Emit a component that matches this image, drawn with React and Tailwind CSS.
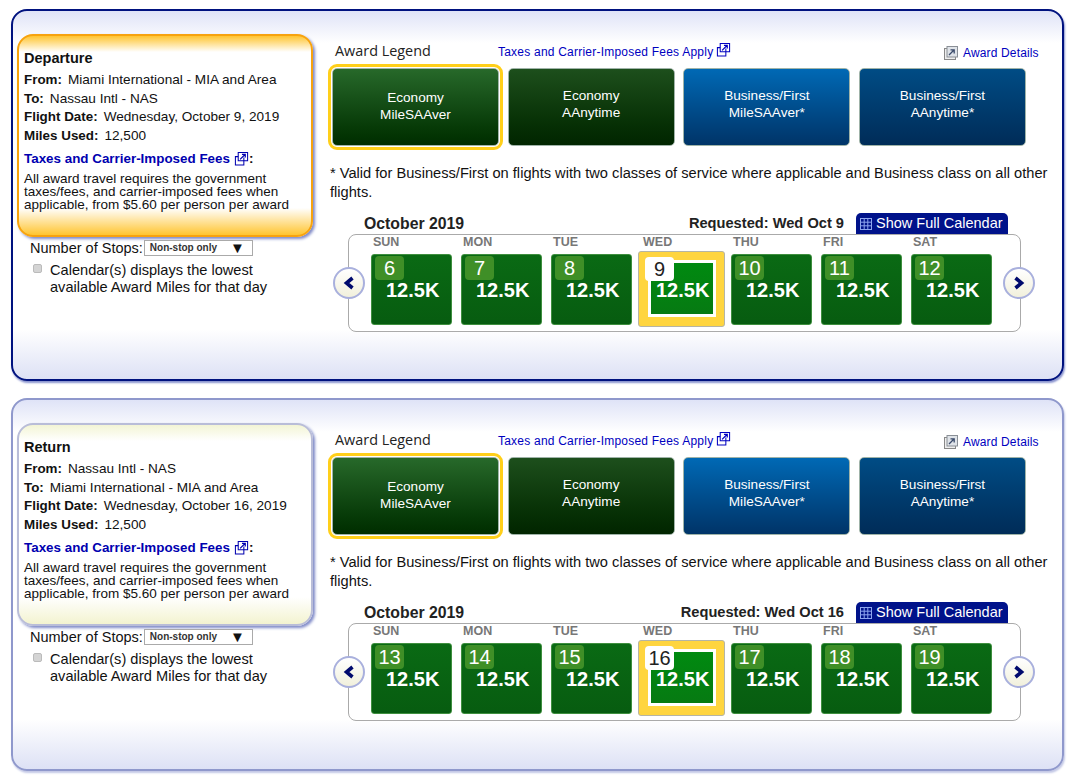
const Popout = ({ className }) => (
  <svg className={className} viewBox="0 0 16 16" fill="none" stroke="currentColor" strokeWidth="1.1">
    <path d="M10.5 7V15H1.5V6H4.5" />
    <path d="M4.5 1.5H14.5V10.5H4.5Z" />
    <path d="M6.5 9L12 3.5M8.5 3.5H12V7" strokeWidth="1.3" />
  </svg>
);

const DetailsIcon = () => (
  <svg className="w-[14px] h-[14px]" viewBox="0 0 14 14">
    <rect x="0.5" y="2.5" width="11" height="11" fill="#eee" stroke="#888" />
    <rect x="3" y="0.5" width="10.5" height="10.5" fill="#dfe3e8" stroke="#8a8f96" />
    <path d="M5 9L10 4M6.5 3.8H10.2V7.5" fill="none" stroke="#3a4a6a" strokeWidth="1.3" />
  </svg>
);

const GridIcon = () => (
  <svg className="w-[12px] h-[12px]" viewBox="0 0 12 12" fill="none" stroke="#8fa6ee" strokeWidth="1">
    <rect x="0.5" y="0.5" width="11" height="11" />
    <path d="M4.2 0.5V11.5M7.8 0.5V11.5M0.5 4.2H11.5M0.5 7.8H11.5" />
  </svg>
);

const Arrow = ({ left }) => (
  <div
    className={
      "absolute top-[32px] w-[32px] h-[32px] rounded-full border-2 border-[#a9b0dd] bg-gradient-to-b from-white to-[#f1f0dc] flex items-center justify-center " +
      (left ? "left-[-16px]" : "right-[-15px]")
    }
  >
    <svg className="w-[14px] h-[14px]" viewBox="0 0 14 14" fill="none" stroke="#000a6e" strokeWidth="3.6">
      <path d={left ? "M10.5 2L4.5 7L10.5 12" : "M3.5 2L9.5 7L3.5 12"} />
    </svg>
  </div>
);

const legend = [
  { top: "Economy", bottom: "MileSAAver", cls: "from-[#27692a] to-[#002d00] outline-[3px] outline-offset-[1px] outline-[#ffcf1a] pb-[3px]" },
  { top: "Economy", bottom: "AAnytime", cls: "from-[#1d4f1c] to-[#012500] pb-[7px]" },
  { top: "Business/First", bottom: "MileSAAver*", cls: "from-[#0069b5] to-[#003468] pb-[7px]" },
  { top: "Business/First", bottom: "AAnytime*", cls: "from-[#004c85] to-[#002c58] pb-[7px]" },
];

const dayNames = ["SUN", "MON", "TUE", "WED", "THU", "FRI", "SAT"];

const DayTile = ({ day, selected }) => {
  if (selected) {
    return (
      <div className="relative -mt-[3px] -mx-[3px] w-[87px] h-[76px] rounded-[3px] bg-[#ffd53f] border border-[#b5b5a5] pl-[9px] pt-[8px]">
        <div className="w-[68px] h-[57px] border-[3px] border-white bg-gradient-to-b from-[#008a10] to-[#067a12] pt-[17px] pl-[5px] text-white text-[20px] leading-[20px] font-bold">
          12.5K
        </div>
        <div className="absolute left-[6px] top-[5px] w-[29px] h-[24px] rounded-[4px] bg-white text-[#222] text-[20px] leading-[24px] text-center">
          {day}
        </div>
      </div>
    );
  }
  return (
    <div className="w-[81px] h-[71px] rounded-[3px] border border-[#3f8f3f] bg-gradient-to-b from-[#0a6a14] to-[#075c10] pt-[1px] pl-[3px]">
      <div className="w-[29px] h-[24px] rounded-[4px] bg-[#3f8f27] text-white text-[20px] leading-[24px] text-center">
        {day}
      </div>
      <div className="ml-[11px] text-white text-[20px] leading-[20px] font-bold">12.5K</div>
    </div>
  );
};

const Row = ({ label, value }) => (
  <div className="text-[13.6px] leading-[18.67px] text-[#111]">
    <b className="mr-[6px] text-[13.4px]">{label}</b>
    {value}
  </div>
);

const Panel = ({ active, title, from, to, date, requested, startDay, className }) => (
  <div
    className={
      "w-[1053px] rounded-[16px] border-2 flex bg-[linear-gradient(#dfe3f7,#fff_32px,#fff_calc(100%-50px),#dde1f5)] " +
      (active
        ? "border-[#00127f] shadow-[1px_2px_2px_#8a94cf] "
        : "border-[#8f98cc] shadow-[1px_2px_2px_#c3c8e6] ") +
      className
    }
  >
    <div className="ml-[4px] mt-[23px] w-[296px] shrink-0">
      <div
        className={
          "h-[203px] rounded-[16px] border-2 px-[5px] pt-[13px] " +
          (active
            ? "border-[#f7a30f] shadow-[2px_2px_3px_#7f8ac8] bg-[linear-gradient(#ffc531,#fff_16px,#fff_calc(100%-27px),#ffc531)]"
            : "border-[#b9bdd8] shadow-[2px_2px_3px_#7f8ac8] bg-[linear-gradient(#f3f5d5,#fff_16px,#fff_calc(100%-27px),#f3f3d0)]")
        }
      >
        <div className="text-[14.5px] leading-[19px] font-bold text-[#111]">{title}</div>
        <div className="mt-[3px]">
          <Row label="From:" value={from} />
          <Row label="To:" value={to} />
          <Row label="Flight Date:" value={date} />
          <Row label="Miles Used:" value="12,500" />
        </div>
        <div className="mt-[3px] flex items-center text-[13.4px] leading-[19px] font-bold text-[#0000b0]">
          Taxes and Carrier-Imposed Fees
          <Popout className="w-[15px] h-[15px] ml-[4px]" />
          <span className="text-[#111]">:</span>
        </div>
        <p className="mt-[4px] text-[13.5px] leading-[13px] text-[#111]">
          All award travel requires the government taxes/fees, and carrier-imposed fees when applicable, from $5.60 per person per award
        </p>
      </div>
      <div className="mt-[3px] ml-[13px] flex items-center text-[14.5px] leading-[16px] text-[#111]">
        Number of Stops:
        <div className="ml-[1px] w-[109px] h-[16px] border border-[#aaa] bg-white flex items-center justify-between pl-[5px] pr-[7px] text-[10px] font-bold text-[#333]">
          <span>Non-stop only</span>
          <span className="text-[15px] leading-[14px] text-[#111]">▼</span>
        </div>
      </div>
      <div className="mt-[6px] ml-[16px] flex">
        <span className="mt-[2px] w-[9px] h-[9px] shrink-0 rounded-[2px] bg-[#d4d4d4] border border-[#bbb]" />
        <p className="ml-[8px] text-[14.6px] leading-[17px] text-[#111]">
          Calendar(s) displays the lowest
          <br />
          available Award Miles for that day
        </p>
      </div>
    </div>

    <div className="ml-[15px] mt-[30px] w-[720px] shrink-0">
      <div className="h-[20px] flex items-center whitespace-nowrap">
        <span className="ml-[7px] w-[163px] font-['Open_Sans',sans-serif] text-[14.4px] text-[#222]">Award Legend</span>
        <span className="w-[446px] flex items-center text-[12px] tracking-[0.22px] text-[#0000c0] mt-[1px]">
          Taxes and Carrier-Imposed Fees Apply
          <Popout className="w-[15px] h-[15px] ml-[3px] -mt-[4px]" />
        </span>
        <span className="flex items-center text-[12px] tracking-[0.15px] text-[#0000c0] mt-[3px]">
          <DetailsIcon />
          <span className="ml-[5px]">Award Details</span>
        </span>
      </div>
      <div className="mt-[7px] ml-[4px] flex gap-[8.67px]">
        {legend.map((item) => (
          <div
            key={item.top + item.bottom}
            className={
              "w-[167px] h-[78px] rounded-[5px] border border-[#9fb3a8] bg-gradient-to-b text-white text-[13.6px] leading-[17px] text-center flex flex-col justify-center " +
              item.cls
            }
          >
            <span>{item.top}</span>
            <span>{item.bottom}</span>
          </div>
        ))}
      </div>
      <p className="mt-[18px] ml-[2px] text-[14.65px] leading-[19px] text-[#111]">
        * Valid for Business/First on flights with two classes of service where applicable and Business class on all other flights.
      </p>
      <div className="mt-[11px] ml-[36px] w-[644px] h-[21px] flex items-center">
        <span className="text-[15.8px] font-bold text-[#222]">October 2019</span>
        <span className="ml-auto text-[14.65px] font-bold text-[#222]">Requested: {requested}</span>
        <span className="ml-[12px] w-[152px] h-[21px] rounded-t-[5px] bg-[#00128a] text-white text-[14.5px] flex items-center pl-[4px]">
          <GridIcon />
          <span className="ml-[4px]">Show Full Calendar</span>
        </span>
      </div>
      <div className="relative ml-[20px] w-[673px] h-[98px] rounded-[8px] border border-[#aaa] bg-white pl-[22px] flex">
        <Arrow left />
        {dayNames.map((name, i) => (
          <div key={name} className="w-[90px]">
            <div className="h-[19px] pl-[2px] text-[12.5px] leading-[14px] font-bold text-[#777]">{name}</div>
            <DayTile day={startDay + i} selected={i === 3} />
          </div>
        ))}
        <Arrow />
      </div>
    </div>
  </div>
);

export default function App() {
  return (
    <div className="w-[1077px] h-[782px] bg-white pt-[9px] pl-[11px] font-['Liberation_Sans',Arial,sans-serif] overflow-hidden">
      <Panel
        active
        className="h-[372px]"
        title="Departure"
        from="Miami International - MIA and Area"
        to="Nassau Intl - NAS"
        date="Wednesday, October 9, 2019"
        requested="Wed Oct 9"
        startDay={6}
      />
      <Panel
        className="h-[373px] mt-[17px]"
        title="Return"
        from="Nassau Intl - NAS"
        to="Miami International - MIA and Area"
        date="Wednesday, October 16, 2019"
        requested="Wed Oct 16"
        startDay={13}
      />
    </div>
  );
}
